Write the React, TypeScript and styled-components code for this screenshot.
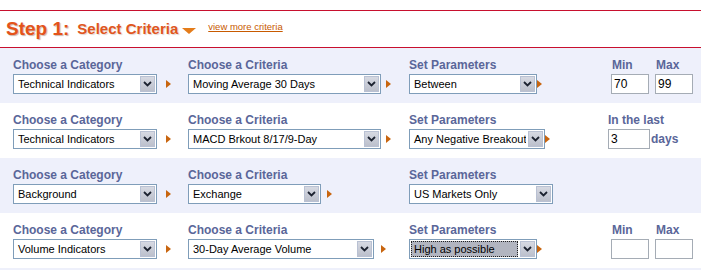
import React from 'react';
import styled, { createGlobalStyle } from 'styled-components';

const GlobalStyle = createGlobalStyle`
  html, body { margin: 0; padding: 0; background: #fff; overflow: hidden; }
  body { font-family: "Liberation Sans", Arial, sans-serif; }
`;

const Page = styled.div`
  padding-top: 10px;
  width: 701px;
`;

const Header = styled.div`
  height: 36px;
  border-top: 1px solid #c8102e;
  border-bottom: 1px solid #c8102e;
  display: flex;
  align-items: flex-start;
  padding-left: 6px;
`;

const StepNum = styled.span`
  margin-top: 8px;
  font-size: 19px;
  line-height: 19px;
  font-weight: bold;
  color: #e4531a;
  text-shadow: 1px 1px 1px rgba(110, 50, 20, 0.35);
  white-space: nowrap;
`;

const StepTitle = styled.span`
  margin: 10px 0 0 8px;
  font-size: 15px;
  line-height: 15px;
  font-weight: bold;
  color: #e0561e;
  text-shadow: 1px 1px 1px rgba(110, 50, 20, 0.2);
  white-space: nowrap;
`;

const DownCaret = styled.span`
  margin: 17px 0 0 4px;
  width: 0;
  height: 0;
  border-left: 7px solid transparent;
  border-right: 7px solid transparent;
  border-top: 6px solid #e47c1a;
`;

const MoreLink = styled.a`
  margin: 11px 0 0 12px;
  font-size: 9.5px;
  line-height: 10px;
  color: #c85a00;
  text-decoration: underline;
  white-space: nowrap;
  cursor: pointer;
`;

const Row = styled.div<{ $alt?: boolean }>`
  height: 55px;
  box-sizing: border-box;
  padding: 10px 0 0 13px;
  background: ${(p) => (p.$alt ? '#eef0fb' : '#ffffff')};
  display: grid;
  grid-template-columns: 175px 221px 199px 1fr;
`;

const Tail = styled.div`
  height: 3px;
  background: #eef0fb;
`;

const Cell = styled.div<{ $shift?: number }>`
  display: flex;
  flex-direction: column;
  gap: 2px;
  margin-left: ${(p) => p.$shift ?? 0}px;
`;

const Label = styled.div`
  font-size: 12px;
  line-height: 14px;
  font-weight: bold;
  color: #5a6699;
  white-space: nowrap;
`;

const Controls = styled.div`
  display: flex;
  align-items: center;
  height: 20px;
`;

const SelectBox = styled.div<{ $w: number }>`
  width: ${(p) => p.$w}px;
  height: 20px;
  box-sizing: border-box;
  border: 1px solid #7f9db9;
  background: #fff;
  display: flex;
  align-items: center;
`;

const SelectText = styled.div<{ $focus?: boolean }>`
  flex: 1;
  height: 16px;
  margin: 0 2px 0 1px;
  padding-left: 3px;
  font-size: 11px;
  line-height: 16px;
  color: #000;
  white-space: nowrap;
  overflow: hidden;
  background: ${(p) => (p.$focus ? '#b2b5c0' : 'transparent')};
  outline: ${(p) => (p.$focus ? '1px dotted #222' : 'none')};
  outline-offset: -1px;
`;

const DropButton = styled.div`
  width: 15px;
  height: 16px;
  margin-right: 1px;
  box-sizing: border-box;
  border: 1px solid #b9c1d3;
  background: linear-gradient(#d6d9e2, #bcc0cc);
  display: flex;
  align-items: center;
  justify-content: center;
`;

const Pointer = styled.span<{ $gap: number }>`
  margin-left: ${(p) => p.$gap}px;
  width: 0;
  height: 0;
  border-top: 4.5px solid transparent;
  border-bottom: 4.5px solid transparent;
  border-left: 5px solid #c8650f;
`;

const NumGroup = styled.div`
  display: flex;
  gap: 6px;
  margin-left: 3px;
`;

const NumCol = styled.div`
  display: flex;
  flex-direction: column;
  gap: 2px;
`;

const NumLabel = styled(Label)`
  padding-left: 1px;
`;

const NumInput = styled.div<{ $w: number }>`
  width: ${(p) => p.$w}px;
  height: 20px;
  box-sizing: border-box;
  border: 1px solid #a5acb5;
  background: #fff;
  font-size: 12px;
  line-height: 18px;
  padding-left: 2px;
  color: #000;
`;

const Suffix = styled.span`
  margin-left: 1px;
  font-size: 12px;
  font-weight: bold;
  color: #5a6699;
`;

const Dash = styled.span`
  align-self: flex-end;
  margin: 0 0 5px 5px;
  font-size: 12px;
  font-weight: bold;
  color: #223;
`;

const Chevron = () => (
  <svg width="9" height="6" viewBox="0 0 9 6">
    <polyline points="1,1 4.5,4.5 8,1" fill="none" stroke="#1c2230" strokeWidth="1.8" />
  </svg>
);

type SelProps = { w: number; text: string; focus?: boolean };
const Select = ({ w, text, focus }: SelProps) => (
  <SelectBox $w={w}>
    <SelectText $focus={focus}>{text}</SelectText>
    <DropButton>
      <Chevron />
    </DropButton>
  </SelectBox>
);

type Field = { label: string; w: number; text: string; gap?: number; focus?: boolean };

const FieldCell = ({ label, w, text, gap, focus }: Field) => (
  <Cell>
    <Label>{label}</Label>
    <Controls>
      <Select w={w} text={text} focus={focus} />
      {gap !== undefined && <Pointer $gap={gap} />}
    </Controls>
  </Cell>
);

const MinMax = ({ min, max, dash }: { min: string; max: string; dash?: boolean }) => (
  <NumGroup>
    <NumCol>
      <NumLabel>Min</NumLabel>
      <NumInput $w={38}>{min}</NumInput>
    </NumCol>
    <NumCol>
      <NumLabel>Max</NumLabel>
      <NumInput $w={38}>{max}</NumInput>
    </NumCol>
    {dash && <Dash>-</Dash>}
  </NumGroup>
);

export default function App() {
  return (
    <Page>
      <GlobalStyle />
      <Header>
        <StepNum>Step 1:</StepNum>
        <StepTitle>Select Criteria</StepTitle>
        <DownCaret />
        <MoreLink>view more criteria</MoreLink>
      </Header>

      <Row $alt>
        <FieldCell label="Choose a Category" w={144} text="Technical Indicators" gap={9} />
        <FieldCell label="Choose a Criteria" w={193} text="Moving Average 30 Days" gap={5} />
        <FieldCell label="Set Parameters" w={128} text="Between" gap={0} />
        <MinMax min="70" max="99" />
      </Row>

      <Row>
        <FieldCell label="Choose a Category" w={144} text="Technical Indicators" gap={9} />
        <FieldCell label="Choose a Criteria" w={193} text="MACD Brkout 8/17/9-Day" gap={5} />
        <FieldCell label="Set Parameters" w={136} text="Any Negative Breakout" gap={0} />
        <Cell>
          <Label>In the last</Label>
          <Controls>
            <NumInput $w={42}>3</NumInput>
            <Suffix>days</Suffix>
          </Controls>
        </Cell>
      </Row>

      <Row $alt>
        <FieldCell label="Choose a Category" w={144} text="Background" gap={9} />
        <FieldCell label="Choose a Criteria" w={133} text="Exchange" gap={6} />
        <FieldCell label="Set Parameters" w={144} text="US Markets Only" />
        <div />
      </Row>

      <Row>
        <FieldCell label="Choose a Category" w={144} text="Volume Indicators" gap={9} />
        <FieldCell label="Choose a Criteria" w={186} text="30-Day Average Volume" gap={7} />
        <FieldCell label="Set Parameters" w={128} text="High as possible" gap={0} focus />
        <MinMax min="" max="" dash />
      </Row>
      <Tail />
    </Page>
  );
}
